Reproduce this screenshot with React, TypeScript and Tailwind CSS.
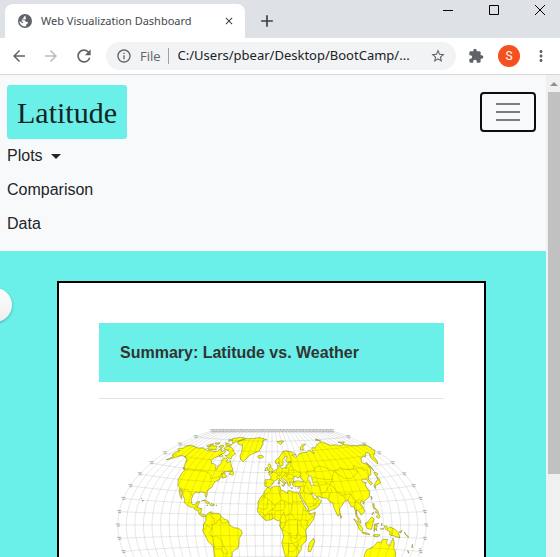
import { MdAdd, MdArrowBack, MdArrowForward, MdClose, MdExtension, MdInfoOutline, MdMoreVert, MdRefresh, MdStarBorder } from "react-icons/md";

type Coord = [number, number];

const MAP_CX = 173;
const MAP_CY = 126;
const MAP_R = 60;

// Winkel tripel projection
function project([lon, lat]: Coord): Coord {
  const l = (lon * Math.PI) / 180;
  const p = (lat * Math.PI) / 180;
  const a = Math.acos(Math.cos(p) * Math.cos(l / 2));
  const sinc = a === 0 ? 1 : Math.sin(a) / a;
  const x = 0.5 * ((l * 2) / Math.PI + (2 * Math.cos(p) * Math.sin(l / 2)) / sinc);
  const y = 0.5 * (p + Math.sin(p) / sinc);
  return [MAP_CX + MAP_R * x, MAP_CY - MAP_R * y];
}

function toPath(points: Coord[], closed: boolean): string {
  const d = points
    .map((c, i) => {
      const [x, y] = project(c);
      return `${i === 0 ? "M" : "L"}${x.toFixed(1)} ${y.toFixed(1)}`;
    })
    .join("");
  return closed ? `${d}Z` : d;
}

function parse(s: string): Coord[] {
  return s.split(" ").map((pair) => pair.split(",").map(Number) as Coord);
}

const land: string[] = [
  // North and Central America
  "-168,66 -162,67 -163,69 -156,71 -150,70.5 -141,69.6 -135,69 -128,70 -124,69.5 -115,68 -108,68 -101,67.8 -96,68.3 -94,71.8 -91,69.5 -88,68 -85,69.5 -82,69 -82,67 -87,65 -87,64 -93,62 -95,59 -93,58.7 -92.5,57 -88,56.5 -82.5,55.2 -82.3,53 -80,51.3 -79,52 -79.5,54.5 -76.7,57 -78,59 -78,62.4 -73.5,62.4 -70,61 -69.5,59 -67.5,58.3 -64.5,60.3 -62,57.5 -60,55.3 -57,53.5 -55.8,52 -59,50.3 -66,50.2 -70,47 -65,49 -64.5,47 -61,45.5 -66,43.6 -67,45 -70,43.7 -70,41.7 -74,40.5 -76,38 -76,35.2 -81,31.8 -80,27 -80.4,25.2 -82,27 -83,29.5 -85,29.7 -89,30.3 -90,29.1 -94,29.6 -97,28 -97.5,24 -97.5,22 -96,19 -94.3,18.2 -91.5,18.6 -90.4,21 -87,21.5 -88,18 -88.5,15.8 -83.3,15 -83.7,11 -82,9 -79.5,9.6 -77,8.5 -78,7.5 -80,7.3 -83,8.2 -85.7,10 -87.6,13 -92,14.4 -94.5,16.2 -97,15.9 -102,18 -105.5,20 -105.5,22.5 -109,25.8 -113,31 -114.7,31.6 -112,27.5 -109.5,23.2 -112,25 -114.5,28 -116,30.5 -117.2,33 -120.5,34.5 -122,37 -124,40 -124.2,46 -123,48.8 -127,51 -130.5,54.7 -134,58 -140,59.8 -147,60.8 -151,59.3 -154,58 -158,56.3 -164,54.7 -158,58.5 -162,59 -165,61 -164,63 -161,64.3 -166,64.5",
  "-73,78.2 -67,76.3 -58,75.5 -54.5,71 -53,68.5 -53.5,66 -50,62 -44,60 -41,63 -38,65.7 -32,68 -23,70.3 -21,74 -18,77 -20,80.5 -12,81.5 -30,83.4 -45,82.3 -60,82 -68,80",
  "-68,62 -65,62 -66,64.8 -62,67 -67,69 -73,72 -81,73.6 -88,73.5 -88,71 -79,70 -73,68 -73,65.5 -78,64.8",
  "-62,82.5 -75,83 -90,81.5 -86,79 -80,76.5 -76,78.5 -65,81",
  "-80,75.5 -81,74.5 -91,74.7 -96,77 -88,76.3",
  "-117,73 -105,73 -102,69.6 -113,68.8 -118,70",
  "-125,72 -123,74 -117,75 -119,72",
  "-116,76 -106,76.4 -107,75 -114,75",
  "-100,74 -93,74 -94,72.3 -101,72.5",
  "-96,80.8 -88,80.2 -93,78.5",
  "-86,65.8 -80.5,64.2 -84,63 -87,63.8",
  "-59.3,47.7 -56,51.4 -53,48 -53.5,46.8",
  "-128,50.7 -123.5,48.4 -125.5,48.8",
  "-85,22 -81,23.2 -76,21 -74.5,20.2 -77.7,19.8 -82,22.4",
  "-74.4,18.4 -72.8,19.9 -68.5,18.6 -71.5,17.7",
  "-78,18.4 -76.3,18.1 -77.3,17.8",
  "-67,18.4 -65.7,18.3 -66.5,18",
  "-156,20.1 -155,19.5 -155.8,19",
  "-158.5,21.6 -157.7,21.2 -158.2,21.2",
  // South America
  "-77,8.5 -75,11 -71.7,12.4 -71.5,10.8 -68,11 -62,10.7 -60,8.5 -57,6 -51.5,4.3 -50,0.8 -48,-0.8 -44,-2.6 -40,-2.9 -35.5,-5.2 -34.9,-8 -38.8,-13 -39.2,-18 -41,-22 -45,-23.4 -48.6,-26 -49,-29 -53,-34 -58,-38 -65,-42 -70,-52 -75,-50 -73.5,-38 -71.5,-30 -70.3,-20 -75.8,-15 -79.5,-7.5 -81.2,-5 -80,-2.5 -80,0.5 -77.3,4 -77.5,7",
  // Africa
  "-17.4,14.7 -16.3,19 -17,21.5 -14.5,26 -10,29.5 -9.6,32 -6,35.8 -2,35.1 3,36.9 10,37.3 11,34.5 10.5,33.8 15,32.4 19,30.3 20,32.5 23,32.6 29,31 32.3,31.2 33.8,28 35.8,24 37.3,21 38.5,18 43,12.6 44.2,10.4 51.2,11.8 48,4.5 43,-1 39.3,-5 40.6,-11 40.5,-15 35,-20 35.4,-23.5 32.8,-26.5 31,-30 26,-34 18.3,-34 15.2,-27 11.7,-17 13.7,-11 12.2,-6 9,-1 9.7,3.8 6,4.3 2,6.3 -2,4.8 -7.6,4.4 -13,8.5 -16.7,12.4",
  "49.3,-12.2 50.5,-15.7 48.8,-20 47,-25 44,-25 43.5,-22 44.5,-17",
  // Europe and Asia
  "-9,43.2 -9.3,38.7 -9,37 -5.6,36.1 -2,36.8 0,38.7 3,42 6,43.1 8.7,44.4 10.5,42.8 12.5,41.5 15.8,39.8 15.8,38 17,39 16.7,40.5 18.4,40 15,42 12.4,44.3 13.6,45.6 16,43.5 19.4,41.8 20,39.5 22,36.7 24,38 23,40.4 26.3,40.8 29,41.2 28,43.5 30.7,46.4 33,46 34,44.4 36.5,45.3 39,47 37.5,45 41.5,42 41,41 36,41.7 32,41.9 28,40.6 26.3,39 27.5,37 30.5,36.5 36,36.7 35.8,34 34.3,31.3 35,28.2 39,21.8 42.7,16.5 43.5,12.8 52,15.7 55.5,17.8 59.8,22.5 56.3,24.5 56.3,26.2 51.6,24.4 50.2,26.5 48,30 50.8,29.5 54,26.7 57,27 61.5,25.2 66.7,25 70,21 72.7,21.1 73.5,16 76.3,9.7 77.5,8.1 79.9,10.3 80.2,15 82.3,16.7 87,21.2 91.8,22.5 94.4,16.2 97.5,16.5 98.4,12 98.3,8 100.4,6 101.5,2.8 104,1.4 103.4,4.3 100.4,7.4 99.3,10 100,13.4 102.5,12.3 104.8,8.7 109.2,11.8 108.5,15.5 105.8,19 108,21.6 110.3,20.5 113.8,22.2 118.6,24.6 121.8,29 120,33 119.4,35 122.4,37 118.8,37.5 118,39.2 121.5,40.6 124.8,39.8 125.2,37.8 126.5,34.5 129.3,35.5 127.5,39.7 130,42.3 135,43.5 140.3,48.4 141,52.5 137,54 135.3,54.8 142.8,59.2 151,59.2 156,61.7 164,62.5 162,60.5 156.8,57.5 156.7,51.2 160,53.5 162.5,56 163.4,58.2 170,60 179,62.5 177.5,64.7 180,65.2 180,69 171,69.7 161,69.6 151,71.2 140,72.7 128,72 126,73.5 114,73.5 107,76.8 104,77.7 88,75 81,72.2 75,72.8 72.8,71 72.5,67 69,68.7 67,70.5 60,68.5 54,68.5 46,67.5 44,66 38,64.2 33,66.6 41,66.4 36,69 30,70 25,71 18,69.5 13,65.5 5.3,61.7 5.6,58.8 8,58.1 10.7,59.3 12.5,56 16.4,57 17,60.5 17.5,62.5 22,65.5 25.3,65 21.5,61.5 23,59.9 30,60 24,59 24,57.2 21.5,57.3 21,55 14,54 10.7,56.5 8.3,57 8.6,54 4,52 1.5,50.4 -1.5,49.5 -4.7,48.4 -1.3,46 -1.8,43.4",
  "-5.5,50.1 1.3,51.2 1.7,52.7 -1.5,55 -2,57.5 -5,58.5 -6,56.7 -3,54.6 -4.6,53.2 -5,51.7 -3,51.4",
  "-10,51.8 -6.3,52.3 -6,54.7 -8.4,55.1",
  "-24,65.5 -22,64 -18.5,63.5 -13.6,65 -16,66.4 -22,66.3",
  "11,79.5 20,80.3 26,80 17,76.7",
  "52,71 57,70.7 58,73.5 68,76.5 62,76.2 54,74",
  "95,79.5 100,81 105,78.5",
  "137,75.8 150,75.2 142,73.4",
  "8.2,41 9.6,41 9.4,39.1 8.5,39",
  "9,43 9.5,42 9,41.4",
  "12.4,38 15.6,38.2 15,36.7",
  "23.6,35.5 26.2,35.2 24.7,34.9",
  "32.3,35 34.5,35.6 33.6,34.7",
  "142,54.3 143.5,50 142.7,46.2 142,49",
  "141.8,45.4 145.3,43.4 141.2,41.8 140.2,42.4",
  "141,41.5 142,39.5 140.8,35.7 137,34.7 131,33.8 132.5,35.4 136.8,37.4 139.7,39",
  "130,33.5 132,33 130.6,31.2",
  "121,25.1 121.9,24.6 120.8,22",
  "108.7,19.3 111,20 109.6,18.3",
  "80,9.8 81.8,7.4 80.5,6",
  "95.3,5.6 98.5,4 103.8,-1 106,-3.2 105.7,-5.8 102,-4 98.7,1.5",
  "105.2,-6.4 108.5,-6.6 114.4,-7.8 114.4,-8.6 106.5,-7.4",
  "109,1.8 111,1.8 114,4.8 117,7 119,5.2 117.7,1 116,-3.8 111.7,-3.3 109.6,-1",
  "119.7,0.5 124.8,1.5 120.5,0.2 123.2,-1 121.5,-2 122.5,-5 120.3,-3 119.5,-5.5 119,-3",
  "120.5,18.5 122.2,18.4 121.5,15.5 124,13 120.7,14",
  "122,7 125.3,9.7 126.5,7.2 125.3,5.7",
  "122,11.8 125,12.4 125,10.2 122,10.5",
  "117.2,8.5 119.5,11.3 118.7,10",
  "127.5,1 128.6,1.3 128,-0.7",
  "126.2,-3.3 130.7,-3.2 128,-3.5",
  "119,-8.5 123,-8.3 127,-8.5 124,-10.2 119,-9.5",
  "131,-0.8 134,-0.8 135,-3.3 137.8,-1.5 144.5,-3.9 147.7,-6 150.7,-10.5 147.5,-10 143,-9 138,-8.3 138,-5.5 133,-4 132,-2.8",
  "148.5,-5.7 152,-4.3 151,-6.2",
  "154.7,-5.5 157,-7.3 160.8,-9.5 160,-9.7 155,-6.5",
  "164,-20.1 167,-22.2 166,-22",
  "167,-15 168.3,-17.8 167.5,-16.5",
  "177.3,-17.7 178.6,-18 178,-18.3",
  "142.5,-10.7 145.3,-15 146.3,-19 150.8,-23 153.5,-28 150,-37 140,-38 130,-31.5 116,-35 113.5,-26 114,-22 119,-20 122.2,-18 125,-14.5 129.5,-15 131,-12 136.8,-12.2 135.5,-15 140.8,-17.5",
];

const water: string[] = ["49,45.5 53,46.8 53,42 54,37.2 50,37.3 49.5,41 47.5,43"];

// National borders
const borders: string[] = [
  "-141,69.6 -141,60 -135,59 -130,55.5", "-123,49 -95,49 -88,48 -83,45.5 -82,42.5 -76,44 -71,45 -67.5,47 -67,45",
  "-117,32.6 -111,31.4 -106.5,31.8 -102,29.5 -97.5,26", "-92,14.5 -90.5,17.7 -88.5,16", "-85.5,11 -83.6,11", "-88,13 -85,14 -83.3,15",
  "-72,11.8 -73,9 -70,6.8 -67.5,6 -67,1.2 -70,0 -70,-4.2 -73,-2.3 -75.5,0 -79,1.4", "-67,1.2 -64,2 -64,4.2 -60.7,5 -60,8.2", "-60.7,5 -58,1.5 -52,2.3 -51.5,4", "-70,-4.2 -74,-7.5 -70.5,-11 -69,-12.5 -69.5,-17.5 -70.3,-18.3", "-70.5,-11 -65.3,-10 -60,-13.6 -58,-19.5 -62,-22.3 -66,-22 -68,-22.9 -69.5,-17.5", "-80,-3.4 -78.5,-4.8 -75.5,-0.5", "-58,-19.5 -54.5,-24 -54.6,-26 -58.5,-27.2 -62,-22.3", "-54,-26 -57.6,-30 -53.4,-33.7",
  "-8.7,27.6 -8.7,29 -2,32.2 -1.7,35", "-13,27.6 -8.7,27.6 -8.7,26 -12,26 -12,23.4 -17,21.3", "-8.7,27 -5,25 -6,15.5 -12,15 -16.3,16.2", "-5,25 3,19 11.7,23.5 9.5,30.2 8,34 8.5,36.8", "9.5,30.2 11.5,33.1", "11.7,23.5 15,23 24,19.5 25,22 25,31.6", "25,22 36.8,22", "15,23 15.5,17 13.5,14 4,13.5 0,15 4,16.5 4,19", "24,19.5 23.5,15.5 22,11 15,8 14,12.5", "22,11 27.5,5 34,4.3 36,10 36.5,14.5 38.5,18", "36.5,14.5 42.5,12.5", "36,5 42,4 48,8 43,10.8", "42,4 41,-1.5", "34,4.3 33.9,-1 37.7,-3.7 39.2,-4.7", "3,6.3 3.6,12", "0,15 -5,12 -5,10 0,11 1,6.2", "-3,5 -2.8,10", "-8,4.5 -8,9 -5,10", "-11.5,7 -8,9 -12,12.3 -15,12.6", "9,4.8 14,12.5", "10,2.2 16,2 16,7.5", "16,2 18.5,5 27.5,5", "16,2 14,-2 12,-5 16.5,-6 19,-8 22,-7.5 22,-13 24,-17.7 12,-17.2", "14,-2 11.2,-3.7", "22,-11 28.5,-13 28.5,-9 30.7,-8.3 29.5,-3 29.7,2 30.8,3.7", "30.7,-8.3 34.5,-11.6 40.5,-10.8", "24,-17.7 30,-16 33,-14 34.5,-11.6", "25.3,-17.8 29.5,-22.2 32.7,-16.5", "20,-18 20,-28.4 17,-28.6", "20,-25 25.5,-25.6 29.5,-22.2 31.5,-23 32.8,-26.8",
  "-1.8,43.4 3,42.4", "-7,42 -7.3,37.2", "2.5,51 6,49.5 8,49 7.6,47.5 6,46 7.5,43.8", "7,53.3 6,50.5", "14,54 15,51 12.3,50.2 13.5,48.7 10,47.4 7.6,47.5", "15,51 19,49.5 23,49.2 24,54 19,54.4", "10,47 16.5,46.8 17,48.6 22.5,48.4 21,46.2 16.5,46.8", "22.5,48.4 28,48.2 28.5,45.4", "21,46.2 22.8,44 28.5,43.8", "22.8,44 22.5,41.3 26.3,41.8", "24,54 28,56 27.5,59.3", "24,52 32,52.2 40,49.5 38.3,47.2", "28,56 31,53.5 32,52.2", "28,70 29,66 31.3,62.5 28,60.6", "21,69 24,66", "12,64 12,60 11,59", "44,41 48,42",
  "36,36.7 42,37.1 44.8,39.8 41.5,41.5", "45,37 46,33.5 48,30.2", "42,37.1 41,34.4 39,32 35,29.5", "39,32 44.7,29.2 48,29", "43,16.7 52,19 55,22.7 51.5,24.3", "52,19 53,16.6", "54,37.3 61,36.5 61,31.5 61.6,25.2", "49,46.5 47,50 55,51 61,51 62,54 70,55 77,53.5 83,51 87,49.2 82,45.3 80,42 71,42.5 62,43.5 56,45 53,42", "56,41.3 62,37.5 66.5,37.3 71,38.5 74.8,37.3", "61.3,30 66.3,30 70,34 74.8,37.3 80,42", "74.8,37.3 79,34 81,30.3 88,27.5 92,27.7 97.3,28.3 98,24 101,21.5 106,22.8 108,21.6", "68,24 71,28 74.5,31 74,34", "81,30.3 84,27 88,26.4 89,22", "92,22 93,24 97.3,28.3", "98,18 98.5,14 99.3,10", "98,18 101,21.5 105,18.5 107.5,15 105,14.3 102.5,13.5", "87,49.2 98,52 107,50 116,49.8 120,47 111,44 105,41.6 96,42.7 87,49.2", "116,49.8 120,53 127,50 131,47.8 135,48.3 131,42.8", "124.5,40 130,42.3", "126.5,38 128.4,38.6", "109.5,1.5 115,2 117.5,4.1", "141,-2.6 141,-9.1",
];

const range = (from: number, to: number, step: number) => Array.from({ length: Math.round((to - from) / step) + 1 }, (_, i) => from + i * step);
const meridians = range(-180, 180, 10).map((lon) => toPath(range(-90, 90, 5).map((lat): Coord => [lon, lat]), false)).join("");
const parallels = range(-90, 90, 10).map((lat) => toPath(range(-180, 180, 10).map((lon): Coord => [lon, lat]), false)).join("");
const edgeMarks: Coord[] = [...range(-80, 80, 10).flatMap((lat): Coord[] => [[-180, lat], [180, lat]]), ...range(-180, 180, 10).map((lon): Coord => [lon, 90])];

function WorldMap() {
  return (
    <svg viewBox="0 0 345 252" className="block w-full" role="img" aria-label="World map">
      <path d={land.map((s) => toPath(parse(s), true)).join("")} fill="#ffff00" stroke="#77772a" strokeWidth="0.5" strokeLinejoin="round" />
      <path d={water.map((s) => toPath(parse(s), true)).join("")} fill="#ffffff" stroke="#77772a" strokeWidth="0.4" />
      <path d={borders.map((s) => toPath(parse(s), false)).join("")} fill="none" stroke="#8c8500" strokeWidth="0.5" strokeOpacity="0.6" />
      <path d={meridians + parallels} fill="none" stroke="#444444" strokeWidth="0.5" strokeOpacity="0.25" />
      {edgeMarks.map((c) => {
        const [x, y] = project(c);
        return <path key={c.join()} d={`M${(x - 2).toFixed(1)} ${(y - 1).toFixed(1)}h4m-3 2h3`} stroke="#555555" strokeWidth="0.9" strokeOpacity="0.5" />;
      })}
    </svg>
  );
}

function GlobeIcon() {
  return (
    <svg viewBox="0 0 14 14" className="size-3.5 shrink-0" aria-hidden="true">
      <circle cx="7" cy="7" r="7" fill="#5f6368" />
      <path d="M7.800 1.600 5.700 3.100 5.400 4.500 3.800 4.900 3.700 6.200 6.600 6.300 8 7.700 9.800 7.900 10 9.200 8.500 10 8 12.300 C4.200 12.900 1.500 10.200 1.600 6.900 L4.500 9.200 5.200 8.300 3.700 7.200 3.700 5.600 7.200 5.400 8.200 4.300 7.400 3.400z" fill="#ffffff" />
      <path d="M9.500 2.200 8.900 4.300 9.800 5.800 12.200 6.500 C12.100 4.500 11.100 3 9.500 2.200z" fill="#5f6368" />
    </svg>
  );
}

function BrowserChrome() {
  return (
    <header className="shrink-0 border-b border-[#d6d8dc] bg-white font-['Open_Sans','Noto_Sans',sans-serif]">
      <div className="flex h-[38px] items-end bg-[#dee1e6]">
        <div className="ml-[5px] flex h-[34px] w-60 shrink-0 items-center rounded-t-lg bg-white pr-2.5 pl-[13px]">
          <GlobeIcon />
          <span className="ml-[9px] flex-1 font-['Noto_Sans','Open_Sans',sans-serif] text-[11px] whitespace-nowrap text-[#45484d]">Web Visualization Dashboard</span>
          <button type="button" aria-label="Close tab"><MdClose className="size-3 text-[#3c4043]" /></button>
        </div>
        <button type="button" aria-label="New tab" className="ml-3 flex h-[34px] items-center"><MdAdd className="size-5 text-[#3c4043]" /></button>
        <div className="ml-auto flex h-full items-start gap-9 pt-[5px] pr-[15px] text-black">
          <button type="button" aria-label="Minimize"><svg viewBox="0 0 10 10" className="size-2.5"><path d="M0 5.500h10" stroke="currentColor" /></svg></button>
          <button type="button" aria-label="Maximize"><svg viewBox="0 0 10 10" className="size-2.5"><path d="M.5.5h9v9h-9z" fill="none" stroke="currentColor" /></svg></button>
          <button type="button" aria-label="Close window"><svg viewBox="0 0 10 10" className="size-2.5"><path d="m0 0 10 10M10 0 0 10" stroke="currentColor" /></svg></button>
        </div>
      </div>
      <div className="flex h-9 items-center pr-2.5 pl-2.5 text-[#5f6368]">
        <button type="button" aria-label="Back"><MdArrowBack className="size-[18px]" /></button>
        <button type="button" aria-label="Forward" className="ml-3.5"><MdArrowForward className="size-[18px] text-[#babcbe]" /></button>
        <button type="button" aria-label="Reload" className="ml-3.5"><MdRefresh className="size-5" /></button>
        <div className="ml-3 flex h-7 min-w-0 flex-1 items-center rounded-full bg-[#f1f3f4] pr-2.5 pl-2.5 text-[13px]">
          <MdInfoOutline className="size-4 shrink-0" />
          <span className="ml-2 border-r border-[#9aa0a6] pr-[7px] leading-4">File</span>
          <input aria-label="Address" readOnly value="C:/Users/pbear/Desktop/BootCamp/..." className="ml-[9px] min-w-0 flex-1 bg-transparent font-['Noto_Sans','Open_Sans',sans-serif] text-[#202124] outline-none" />
          <button type="button" aria-label="Bookmark"><MdStarBorder className="size-4" /></button>
        </div>
        <button type="button" aria-label="Extensions" className="ml-3"><MdExtension className="size-4" /></button>
        <button type="button" aria-label="Profile" className="ml-3.5 flex size-[22px] items-center justify-center rounded-full bg-[#f4511e] font-[Roboto,sans-serif] text-xs text-white">S</button>
        <button type="button" aria-label="Menu" className="ml-3"><MdMoreVert className="size-[18px]" /></button>
      </div>
    </header>
  );
}

function SiteNav() {
  return (
    <nav className="flex items-start justify-between bg-[#f8f9fa] py-2.5 pr-2.5 pl-[7px] text-[#212529]">
      <div>
        <a href="#home" className="flex h-[54px] items-center rounded-[3px] bg-[#6af0e8] px-2.5 font-['Liberation_Serif',serif] text-[30px] text-[#142422]">Latitude</a>
        <ul>
          <li><button type="button" className="flex h-[34px] items-center gap-2">Plots <span className="border-x-[5px] border-t-[5px] border-x-transparent border-t-[#212529]" /></button></li>
          <li><a href="#comparison" className="flex h-[34px] items-center">Comparison</a></li>
          <li><a href="#data" className="flex h-[34px] items-center">Data</a></li>
        </ul>
      </div>
      <button type="button" aria-label="Toggle navigation" className="mt-[7px] flex h-10 w-14 flex-col items-center justify-center gap-1.5 rounded border-2 border-[#0b0d10]">
        <span className="h-0.5 w-6 bg-[#7c7d7d]" />
        <span className="h-0.5 w-6 bg-[#7c7d7d]" />
        <span className="h-0.5 w-6 bg-[#7c7d7d]" />
      </button>
    </nav>
  );
}

export default function App() {
  return (
    <div className="flex h-screen flex-col overflow-hidden bg-white">
      <BrowserChrome />
      <div className="flex min-h-0 flex-1">
        <div className="min-w-0 flex-1 overflow-hidden bg-[#6af0e8] font-['Liberation_Sans',Arial,sans-serif]">
          <SiteNav />
          <main className="relative pt-[30px] pr-[60px] pl-[57px]">
            <button type="button" aria-label="Previous" className="absolute top-[37px] -left-[22px] size-[34px] rounded-full bg-linear-to-b from-white to-[#ededed] shadow-[0_1px_3px_rgba(0,0,0,0.3)]" />
            <section className="border-2 border-black bg-white p-10">
              <h1 className="bg-[#6af0e8] px-[21px] py-[17px] text-base leading-[25px] font-bold text-[#333333]">Summary: Latitude vs. Weather</h1>
              <hr className="mt-4 border-[#e4e4e4]" />
              <WorldMap />
            </section>
          </main>
        </div>
        <div className="flex w-3.5 shrink-0 flex-col bg-[#f0f0f0] pl-0.5" aria-hidden="true">
          <div className="flex h-[17px] items-center justify-center"><span className="border-x-4 border-b-4 border-x-transparent border-b-[#909090]" /></div>
          <div className="h-[82%] max-h-[382px] bg-[#c1c1c1]" />
        </div>
      </div>
    </div>
  );
}
